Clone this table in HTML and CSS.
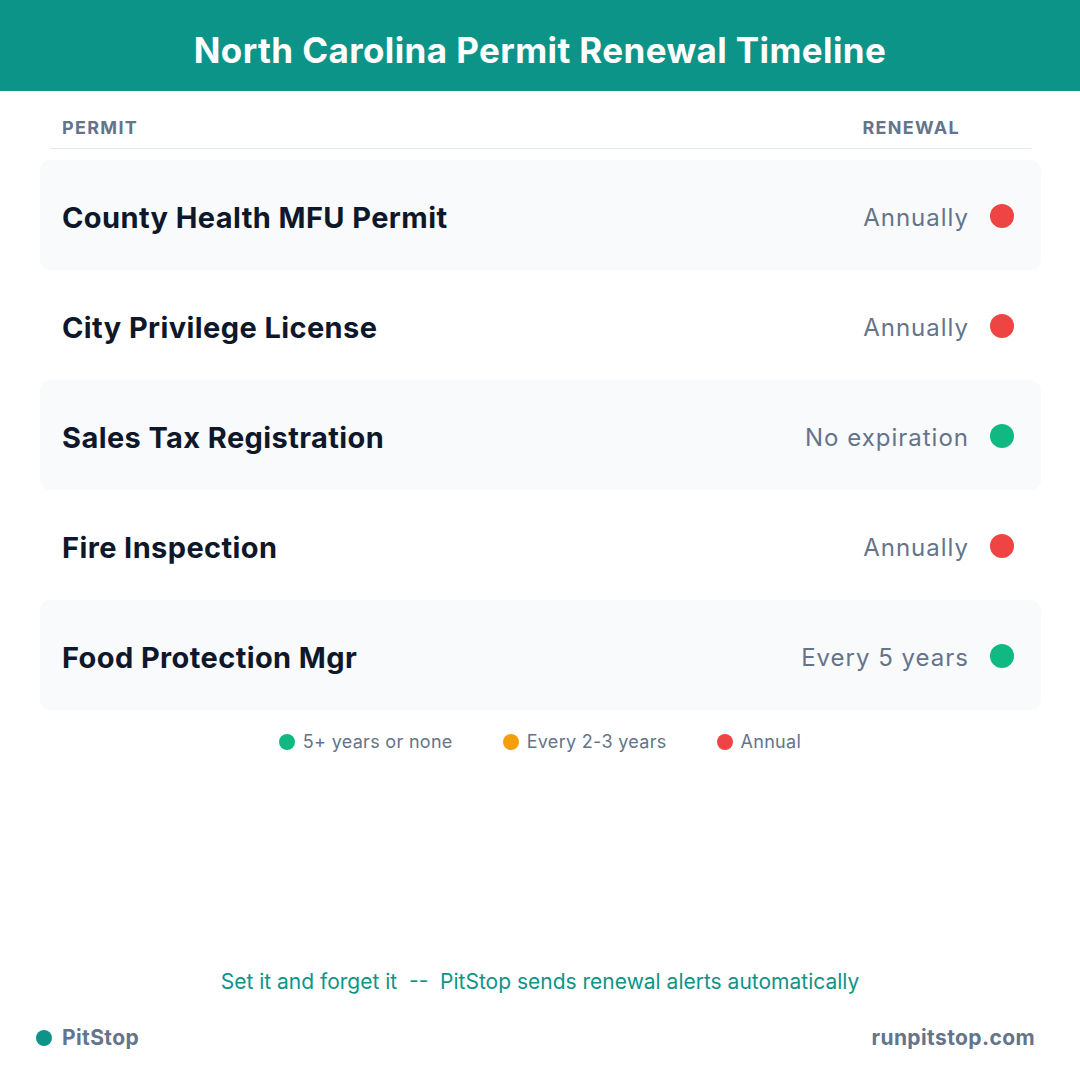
FILE: index.html
```html
<!DOCTYPE html>
<html>
<head>
<meta charset="utf-8">
<link rel="stylesheet" href="styles.css">
</head>
<body>
<div class="page">
  <header class="banner"><h1>North Carolina Permit Renewal Timeline</h1></header>
  <div class="table">
    <div class="thead"><span>PERMIT</span><span>RENEWAL</span></div>
    <div class="row shaded"><span class="name">County Health MFU Permit</span><span class="renew">Annually</span><span class="dot red"></span></div>
    <div class="row"><span class="name">City Privilege License</span><span class="renew">Annually</span><span class="dot red"></span></div>
    <div class="row shaded"><span class="name">Sales Tax Registration</span><span class="renew">No expiration</span><span class="dot green"></span></div>
    <div class="row"><span class="name">Fire Inspection</span><span class="renew">Annually</span><span class="dot red"></span></div>
    <div class="row shaded"><span class="name">Food Protection Mgr</span><span class="renew">Every 5 years</span><span class="dot green"></span></div>
  </div>
  <div class="legend">
    <span class="item"><span class="ldot green"></span>5+ years or none</span>
    <span class="item"><span class="ldot orange"></span>Every 2-3 years</span>
    <span class="item"><span class="ldot red"></span>Annual</span>
  </div>
  <div class="spacer"></div>
  <p class="tagline">Set it and forget it &nbsp;--&nbsp; PitStop sends renewal alerts automatically</p>
  <footer class="foot">
    <span class="brand"><span class="bdot"></span>PitStop</span>
    <span class="site">runpitstop.com</span>
  </footer>
</div>
</body>
</html>
```
FILE: styles.css
```css
* { box-sizing: border-box; margin: 0; padding: 0; }
html, body { width: 1080px; height: 1080px; background: #ffffff; }
body { font-family: Inter, "Noto Sans", sans-serif; }
.page { width: 1080px; height: 1080px; display: flex; flex-direction: column; }
.banner { height: 91px; padding-top: 9px; background: #0d9488; display: flex; align-items: center; justify-content: center; }
.banner h1 { color: #ffffff; font-size: 35px; font-weight: 700; letter-spacing: 0.4px; }
.table { padding: 0 39px 0 40px; }
.thead { margin: 0 10px 11px; padding: 28px 71px 11px 12px; border-bottom: 1px solid #e2e8f0; display: flex; justify-content: space-between; color: #64748b; font-size: 18px; font-weight: 700; line-height: 18px; letter-spacing: 1.3px; }
.row { height: 110px; display: flex; align-items: center; padding: 0 27px 0 22px; border-radius: 10px; }
.row.shaded { background: #f8fafc; }
.name { flex: 1; font-size: 29px; font-weight: 700; color: #0f172a; letter-spacing: 0.4px; margin-top: 4px; }
.renew { font-size: 24px; color: #64748b; margin-right: 21px; margin-top: 5px; letter-spacing: 1px; }
.dot { width: 24px; height: 24px; border-radius: 50%; margin-top: 1px; }
.red { background: #ef4444; }
.green { background: #10b981; }
.orange { background: #f59e0b; }
.legend { display: flex; justify-content: center; gap: 50px; margin-top: 21px; font-size: 18px; color: #64748b; line-height: 22px; letter-spacing: 0.3px; }
.item { display: flex; align-items: center; gap: 8px; }
.ldot { width: 16px; height: 16px; border-radius: 50%; display: inline-block; }
.spacer { flex: 1; }
.tagline { text-align: center; color: #0d9488; font-size: 21px; line-height: 26px; margin-bottom: 1px; }
.foot { display: flex; justify-content: space-between; align-items: center; padding: 29px 45px 29px 36px; color: #64748b; font-size: 21px; font-weight: 700; line-height: 26px; letter-spacing: 0.4px; }
.brand { display: flex; align-items: center; gap: 10px; }
.bdot { width: 16px; height: 16px; border-radius: 50%; background: #0d9488; }
```
